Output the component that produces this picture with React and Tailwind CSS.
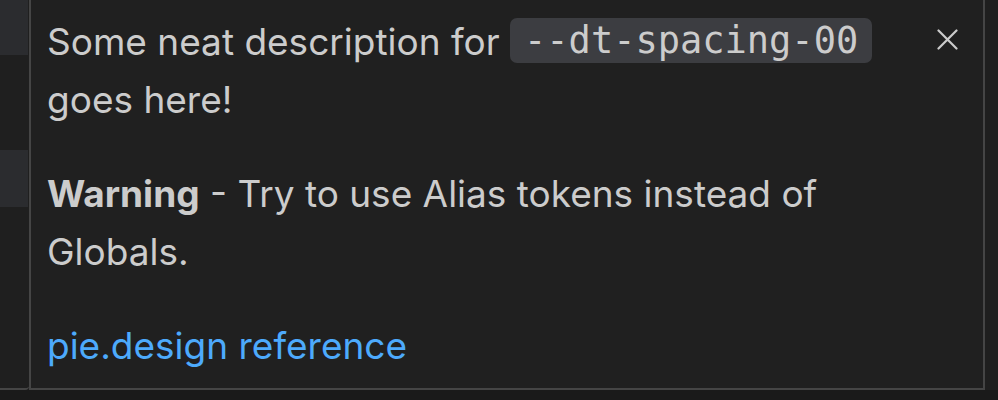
import React from "react";

export default function App() {
  return (
    <div className="w-[998px] h-[400px] bg-[#1f1f1f] flex flex-col overflow-hidden">
      <div className="flex h-[390px] shrink-0">
        <div className="w-[29px] shrink-0 flex flex-col border-b-2 border-[#454545] rounded-br-[4px] bg-[#1f1f1f]">
          <div className="h-[55px] w-[28px] bg-[#2b2c2f]" />
          <div className="h-[95px] w-[28px]" />
          <div className="h-[57px] w-[28px] bg-[#2b2c2f]" />
        </div>
        <div
          className="w-[956px] h-[392px] -mt-[2px] shrink-0 border-2 border-[#454545] bg-[#202020] flex text-[#cccccc]"
          style={{ fontFamily: "Inter, 'Noto Sans', sans-serif" }}
        >
          <div className="w-[884px] pl-[16px] pt-[13px] text-[37px] leading-[58px]">
            <p>
              Some neat description for{" "}
              <code
                className="inline-block h-[45px] leading-[45px] px-[14px] rounded-[7px] bg-[#3c3d41] align-[2px] text-[37px]"
                style={{ fontFamily: "'DejaVu Sans Mono', 'Liberation Mono', monospace" }}
              >
                --dt-spacing-00
              </code>{" "}
              goes here!
            </p>
            <p className="mt-[36px]">
              <span className="font-bold">Warning</span> - Try to use Alias tokens instead of Globals.
            </p>
            <p className="mt-[36px]">
              <a className="text-[#4daafc]">pie.design reference</a>
            </p>
          </div>
          <div className="pt-[29px] pl-[22px]">
            <svg width="21" height="21" viewBox="0 0 21 21" fill="none">
              <path d="M1.5 1.5 L19.5 19.5 M19.5 1.5 L1.5 19.5" stroke="#cccccc" strokeWidth="2.2" strokeLinecap="round" />
            </svg>
          </div>
        </div>
        <div className="flex-1 bg-[#1f1f1f]" />
      </div>
      <div className="flex-1 bg-[#1a1a1a]" />
    </div>
  );
}
